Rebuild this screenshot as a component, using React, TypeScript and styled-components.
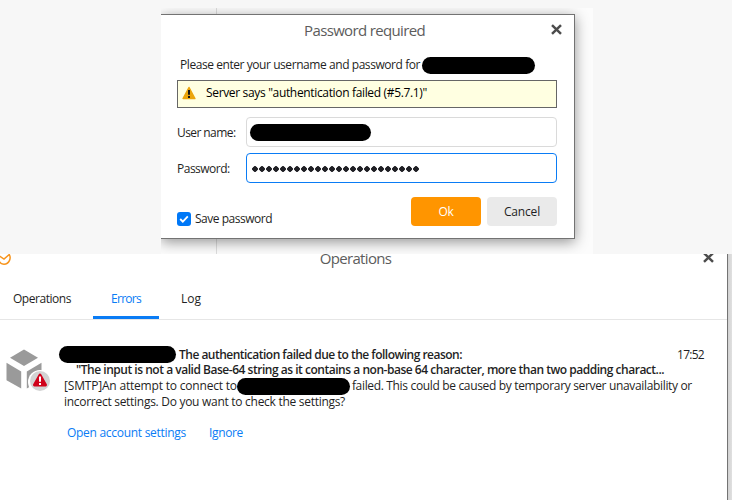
import React from 'react';
import styled, { createGlobalStyle } from 'styled-components';

const GlobalStyle = createGlobalStyle`
  * { box-sizing: border-box; }
  body { margin: 0; overflow: hidden; background: #fff; }
`;

const Page = styled.div`
  width: 732px;
  height: 500px;
  overflow: hidden;
  display: flex;
  flex-direction: column;
  font: 12px/16px "Open Sans", "Noto Sans", sans-serif;
  color: #1f1f24;
  white-space: nowrap;
`;

const Text = styled.span<{ $ls?: number }>`
  letter-spacing: ${(p) => p.$ls ?? 0}px;
`;

const Redacted = styled.span<{ $w: number }>`
  flex: none;
  width: ${(p) => p.$w}px;
  height: 17px;
  border-radius: 9px;
  background: #000;
`;

/* Password prompt */

const PromptArea = styled.section`
  flex: none;
  height: 254px;
  padding: 8px 0 0 161px;
  background: #f7f7f7;
`;

const Backdrop = styled.div`
  width: 432px;
  height: 246px;
  padding-top: 6px;
  overflow: hidden;
  background: linear-gradient(90deg, transparent 55px, #dedede 55px, #dedede 56px, transparent 56px) #fcfcfc;
`;

const Dialog = styled.div`
  width: 414px;
  height: 225px;
  padding: 0 17px 0 16px;
  border: 1px solid #737373;
  border-left: 0;
  background: #fff;
  box-shadow: 0 3px 13px rgba(0, 0, 0, 0.42);
`;

const DialogHeader = styled.header`
  display: flex;
  align-items: center;
  justify-content: flex-end;
  height: 31px;
  margin-right: -5px;
`;

const Title = styled.h1`
  margin: 0;
  font-size: 15px;
  line-height: 20px;
  font-weight: 400;
  color: #5c5c5c;
  letter-spacing: -0.65px;
`;

const DialogTitle = styled(Title)`
  margin: -1px 126px 0 0;
`;

const CloseButton = styled.button`
  display: flex;
  width: 11px;
  height: 11px;
  padding: 0;
  border: 0;
  background: none;
`;

const DialogClose = styled(CloseButton)`
  margin-top: -3px;
`;

const Prompt = styled.div`
  display: flex;
  align-items: center;
  justify-content: space-between;
  height: 17px;
  margin: 11px 22px 6px 3px;
`;

const PromptText = styled(Text)`
  margin-top: -2px;
`;

const Warning = styled.div`
  display: flex;
  align-items: center;
  gap: 9px;
  height: 28px;
  padding: 0 5px 3px 4px;
  border: 1px solid #666;
  background: #ffffe1;
  color: #000;
`;

const Field = styled.label<{ $gap: number }>`
  display: flex;
  align-items: center;
  justify-content: space-between;
  margin-top: ${(p) => p.$gap}px;
`;

const FieldLabel = styled(Text)`
  padding-top: 1px;
`;

const FieldBox = styled.div<{ $focused?: boolean }>`
  display: flex;
  align-items: center;
  width: 311px;
  height: 30px;
  padding: 0 ${(p) => (p.$focused ? 5 : 3)}px;
  border: 1px solid ${(p) => (p.$focused ? '#0a7cf5' : '#dadada')};
  border-radius: 4px;
`;

const Dots = styled.div`
  display: flex;
  gap: 1px;
  margin-top: 1px;
`;

const Dot = styled.i`
  width: 6px;
  height: 6px;
  border-radius: 50%;
  background: radial-gradient(circle, #1f1f24 2.6px, transparent 3px);
`;

const DialogFooter = styled.footer`
  display: flex;
  gap: 6px;
  margin-top: 14px;
`;

const SaveOption = styled.label`
  display: flex;
  align-items: center;
  gap: 4px;
  height: 16px;
  margin: 14px auto 0 0;
`;

const Checkbox = styled.span`
  display: flex;
  width: 14px;
  height: 14px;
  border-radius: 3px;
  background: #0078f7;
`;

const Button = styled.button<{ $primary?: boolean }>`
  width: 70px;
  height: 29px;
  padding: 0;
  border: 0;
  border-radius: 4px;
  font: inherit;
  line-height: 29px;
  background: ${(p) => (p.$primary ? '#ff9500' : '#eaeaea')};
  color: ${(p) => (p.$primary ? '#fff' : '#1f1f24')};
`;

/* Operations window */

const OperationsArea = styled.section`
  flex: 1;
  display: flex;
  overflow: hidden;
  background: linear-gradient(90deg, #cfcfcf, #e0e0e0) right / 5px 100% no-repeat;
`;

const Window = styled.div`
  width: 728px;
  border-right: 1px solid #737373;
  background: #fff;
`;

const WindowHeader = styled.header`
  display: flex;
  align-items: flex-start;
  justify-content: space-between;
  height: 26px;
  padding-right: 13px;
`;

const WindowTitle = styled(Title)`
  margin: -6px 4px 0 0;
`;

const WindowClose = styled(CloseButton)`
  margin-top: -2px;
`;

const Tabs = styled.nav`
  display: flex;
  height: 40px;
  border-bottom: 1px solid #e6e6e6;
`;

const Tab = styled.div<{ $active?: boolean; $w: number }>`
  width: ${(p) => p.$w}px;
  height: 39px;
  padding-top: 11px;
  text-align: center;
  border-bottom: 3px solid ${(p) => (p.$active ? '#0a7cf5' : 'transparent')};
  color: ${(p) => (p.$active ? '#0a7cf5' : '#1f1f24')};
`;

const Message = styled.article`
  display: flex;
  padding: 26px 22px 0 6px;
`;

const MessageBody = styled.div`
  flex: 1;
  margin-left: 13px;
`;

const Summary = styled.div`
  display: flex;
  align-items: center;
  height: 17px;
  margin-left: -5px;
  gap: 3px;
`;

const Strong = styled.strong<{ $ls: number }>`
  font-weight: 600;
  letter-spacing: ${(p) => p.$ls}px;
`;

const Time = styled.time`
  margin: 0 1px 0 auto;
  letter-spacing: -0.72px;
`;

const Quote = styled.div`
  height: 15px;
  padding-left: 12px;
  line-height: 13px;
`;

const Detail = styled.div`
  display: flex;
  align-items: center;
  height: 17px;
`;

const DetailText = styled(Text)`
  margin-top: -1px;
`;

const DetailGap = styled.span`
  width: 2px;
`;

const DetailEnd = styled.div`
  height: 15px;
  line-height: 14px;
  letter-spacing: -0.284px;
`;

const Links = styled.div`
  display: flex;
  gap: 23px;
  margin: 15px 0 0 3px;
  color: #0a7cf5;
`;

const CloseIcon = () => (
  <svg width="11" height="11" viewBox="0 0 11 11" fill="none" stroke="#4c4c4c" strokeWidth="2.5">
    <path d="M1 1.2l9 8.6M10 1.2l-9 8.6" />
  </svg>
);

const WarningIcon = () => (
  <svg width="15" height="14" viewBox="0 0 15 14">
    <path d="M7 1.5L12.9 12.5H1.1z" fill="#eba50c" stroke="#eba50c" strokeWidth="1.5" strokeLinejoin="round" />
    <path d="M6 4h2v4.7H6zM6 10h2v2H6z" fill="#161616" />
  </svg>
);

const LogoIcon = () => (
  <svg width="12" height="12" viewBox="0 0 12 12" fill="none" stroke="#f7941d" strokeWidth="1.5">
    <path d="M-2 1L4 5L9.3 0.5C11.3 4 9.4 10.2 4 10.2C1.5 10.2 0 9 -1 7" />
  </svg>
);

const CubeIcon = () => (
  <svg width="45" height="45" viewBox="0 0 45 45">
    <g transform="translate(0 3)">
      <path d="M18 .5L32 8.7L18 17L4 8.7z" fill="#9a9a9a" />
      <path d="M.5 13.8L15.2 22.4V39.5L.5 31.2z" fill="#9a9a9a" />
      <path d="M35.5 13.8L20.8 22.4V39.5L35.5 31.2z" fill="#9a9a9a" />
      <circle cx="34" cy="33" r="12" fill="#fff" />
      <circle cx="34" cy="32" r="10" fill="#d3d3d3" />
      <path d="M34 26L39.6 36H28.4z" fill="#d0021b" stroke="#d0021b" strokeWidth="2.8" strokeLinejoin="round" />
      <path d="M33 27.5h2v5.3h-2zM33 34.1h2v2h-2z" fill="#fff" />
    </g>
  </svg>
);

export default function App() {
  return (
    <Page>
      <GlobalStyle />
      <PromptArea>
        <Backdrop>
          <Dialog>
            <DialogHeader>
              <DialogTitle>Password required</DialogTitle>
              <DialogClose aria-label="Close"><CloseIcon /></DialogClose>
            </DialogHeader>
            <Prompt>
              <PromptText $ls={-0.434}>Please enter your username and password for</PromptText>
              <Redacted $w={113} />
            </Prompt>
            <Warning>
              <WarningIcon />
              <Text $ls={-0.34}>Server says "authentication failed (#5.7.1)"</Text>
            </Warning>
            <Field $gap={9}>
              <FieldLabel $ls={-0.58}>User name:</FieldLabel>
              <FieldBox><Redacted $w={121} /></FieldBox>
            </Field>
            <Field $gap={6}>
              <FieldLabel $ls={-0.5}>Password:</FieldLabel>
              <FieldBox $focused>
                <Dots>{Array.from({ length: 24 }, (_, i) => <Dot key={i} />)}</Dots>
              </FieldBox>
            </Field>
            <DialogFooter>
              <SaveOption>
                <Checkbox>
                  <svg width="14" height="14" viewBox="0 0 14 14" fill="none" stroke="#fff" strokeWidth="1.8">
                    <path d="M3.2 7l2.6 2.6L10.8 4.4" />
                  </svg>
                </Checkbox>
                <Text $ls={-0.485}>Save password</Text>
              </SaveOption>
              <Button $primary><Text $ls={-0.32}>Ok</Text></Button>
              <Button><Text $ls={-0.184}>Cancel</Text></Button>
            </DialogFooter>
          </Dialog>
        </Backdrop>
      </PromptArea>

      <OperationsArea>
        <Window>
          <WindowHeader>
            <LogoIcon />
            <WindowTitle>Operations</WindowTitle>
            <WindowClose aria-label="Close"><CloseIcon /></WindowClose>
          </WindowHeader>
          <Tabs>
            <Tab $w={84}><Text $ls={-0.459}>Operations</Text></Tab>
            <Tab $w={9} />
            <Tab $w={66} $active><Text $ls={-0.72}>Errors</Text></Tab>
            <Tab $w={64}><Text>Log</Text></Tab>
          </Tabs>
          <Message>
            <CubeIcon />
            <MessageBody>
              <Summary>
                <Redacted $w={117} />
                <Strong $ls={-0.512}>The authentication failed due to the following reason:</Strong>
                <Time>17:52</Time>
              </Summary>
              <Quote>
                <Strong $ls={-0.476}>
                  "The input is not a valid Base-64 string as it contains a non-base 64 character, more than two padding charact...
                </Strong>
              </Quote>
              <Detail>
                <DetailText $ls={-0.19}>[SMTP]An attempt to connect to</DetailText>
                <Redacted $w={113} />
                <DetailGap />
                <DetailText $ls={-0.337}>failed. This could be caused by temporary server unavailability or</DetailText>
              </Detail>
              <DetailEnd>incorrect settings. Do you want to check the settings?</DetailEnd>
              <Links>
                <Text $ls={-0.287}>Open account settings</Text>
                <Text $ls={-0.348}>Ignore</Text>
              </Links>
            </MessageBody>
          </Message>
        </Window>
      </OperationsArea>
    </Page>
  );
}
